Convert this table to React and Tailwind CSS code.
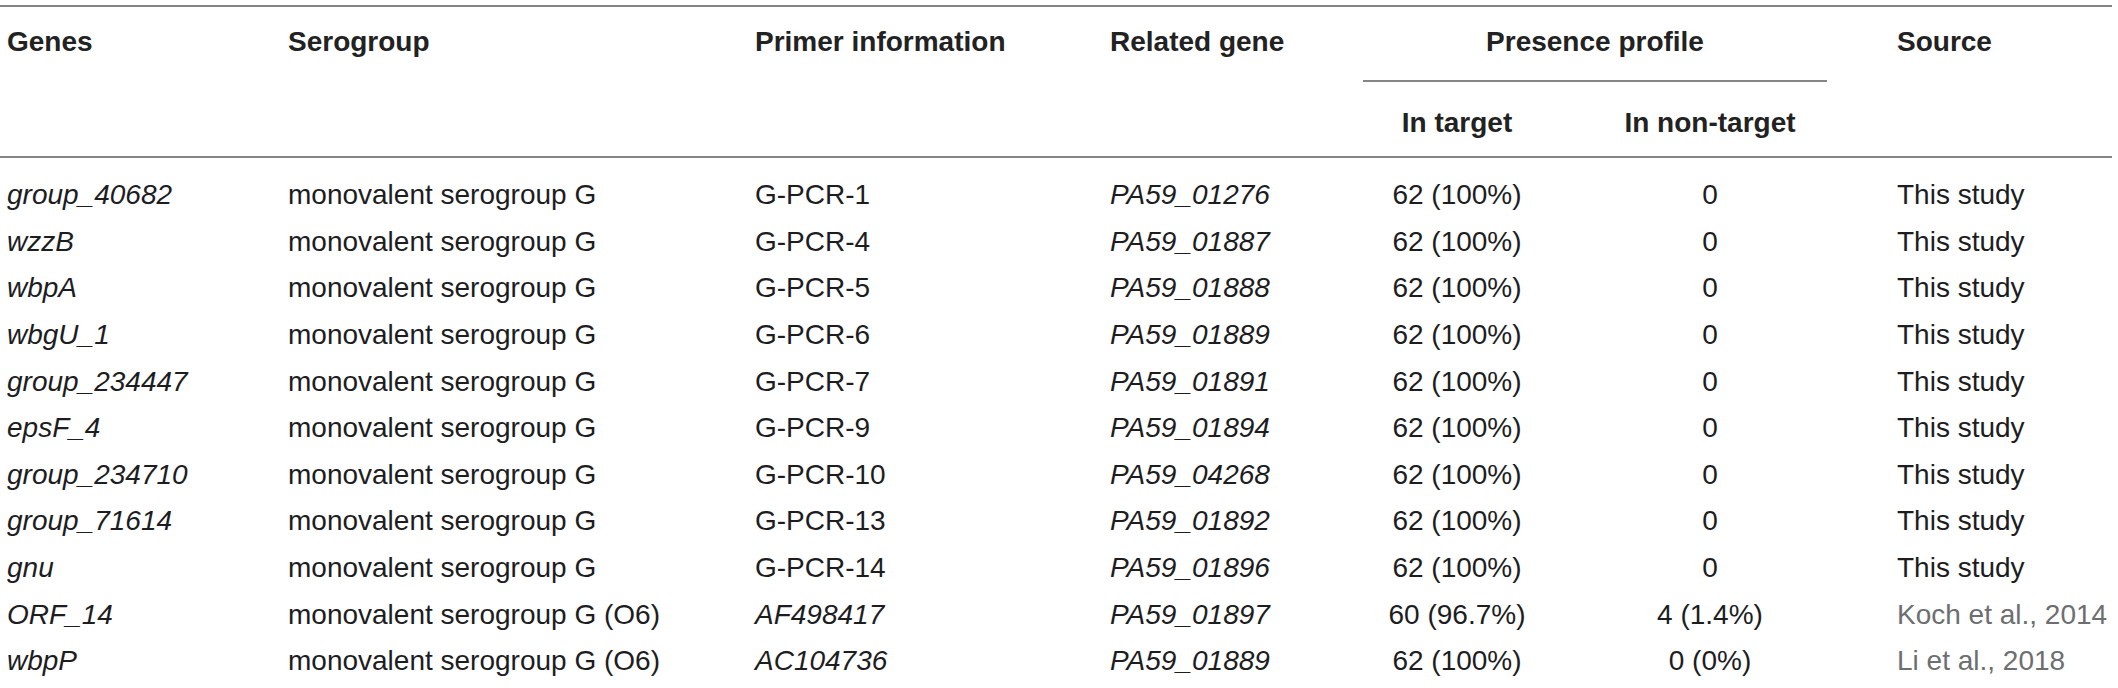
import React from 'react';

const rows = [
  { gene: 'group_40682', sero: 'monovalent serogroup G', primer: 'G-PCR-1', related: 'PA59_01276', target: '62 (100%)', non: '0', source: 'This study' },
  { gene: 'wzzB', sero: 'monovalent serogroup G', primer: 'G-PCR-4', related: 'PA59_01887', target: '62 (100%)', non: '0', source: 'This study' },
  { gene: 'wbpA', sero: 'monovalent serogroup G', primer: 'G-PCR-5', related: 'PA59_01888', target: '62 (100%)', non: '0', source: 'This study' },
  { gene: 'wbgU_1', sero: 'monovalent serogroup G', primer: 'G-PCR-6', related: 'PA59_01889', target: '62 (100%)', non: '0', source: 'This study' },
  { gene: 'group_234447', sero: 'monovalent serogroup G', primer: 'G-PCR-7', related: 'PA59_01891', target: '62 (100%)', non: '0', source: 'This study' },
  { gene: 'epsF_4', sero: 'monovalent serogroup G', primer: 'G-PCR-9', related: 'PA59_01894', target: '62 (100%)', non: '0', source: 'This study' },
  { gene: 'group_234710', sero: 'monovalent serogroup G', primer: 'G-PCR-10', related: 'PA59_04268', target: '62 (100%)', non: '0', source: 'This study' },
  { gene: 'group_71614', sero: 'monovalent serogroup G', primer: 'G-PCR-13', related: 'PA59_01892', target: '62 (100%)', non: '0', source: 'This study' },
  { gene: 'gnu', sero: 'monovalent serogroup G', primer: 'G-PCR-14', related: 'PA59_01896', target: '62 (100%)', non: '0', source: 'This study' },
  { gene: 'ORF_14', sero: 'monovalent serogroup G (O6)', primer: 'AF498417', primerItalic: true, related: 'PA59_01897', target: '60 (96.7%)', non: '4 (1.4%)', source: 'Koch et al., 2014', cited: true },
  { gene: 'wbpP', sero: 'monovalent serogroup G (O6)', primer: 'AC104736', primerItalic: true, related: 'PA59_01889', target: '62 (100%)', non: '0 (0%)', source: 'Li et al., 2018', cited: true },
];

const cols = 'grid grid-cols-[281px_467px_355px_260px_188px_318px_243px]';

export default function App() {
  return (
    <div className="w-[2118px] h-[688px] bg-white text-[#1d1d1f] text-[28px] leading-[32px] font-['Liberation_Sans',Arial,sans-serif]">
      <div className="w-[2112px] pt-[5px]">
        <div className="h-[2px] bg-[#858585]" />

        {/* header */}
        <div className={`${cols} font-bold text-[#222]`}>
          <div className="pl-[7px] pt-[19px]">Genes</div>
          <div className="pl-[7px] pt-[19px]">Serogroup</div>
          <div className="pl-[7px] pt-[19px]">Primer information</div>
          <div className="pl-[7px] pt-[19px]">Related gene</div>
          <div className="col-span-2 flex flex-col">
            <div className="mr-[42px] h-[75px] pt-[19px] text-center border-b-2 border-[#858585]">Presence profile</div>
            <div className="flex h-[74px] pt-[25px]">
              <div className="w-[188px] text-center">In target</div>
              <div className="w-[318px] text-center">In non-target</div>
            </div>
          </div>
          <div className="pl-[28px] pt-[19px]">Source</div>
        </div>
        <div className="h-[2px] bg-[#858585]" />

        {/* body */}
        <div className="pt-[14px]">
          {rows.map((r) => (
            <div key={r.gene} className={`${cols} h-[46.6px] items-center`}>
              <div className="pl-[7px] italic">{r.gene}</div>
              <div className="pl-[7px]">{r.sero}</div>
              <div className={`pl-[7px] ${r.primerItalic ? 'italic' : ''}`}>{r.primer}</div>
              <div className="pl-[7px] italic">{r.related}</div>
              <div className="text-center">{r.target}</div>
              <div className="text-center">{r.non}</div>
              <div className={`pl-[28px] whitespace-nowrap ${r.cited ? 'text-[#6d6e70]' : ''}`}>{r.source}</div>
            </div>
          ))}
        </div>
      </div>
    </div>
  );
}
